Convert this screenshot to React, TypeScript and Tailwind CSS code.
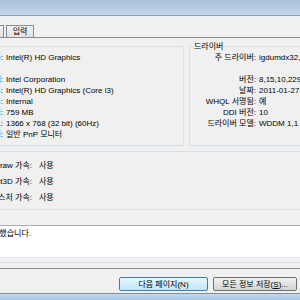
const font = "font-['Liberation_Sans','Noto_Sans_CJK_KR',sans-serif]";

const deviceRows: [string, string][] = [
  ["이름:", "Intel(R) HD Graphics"],
  ["", ""],
  ["제조업체:", "Intel Corporation"],
  ["칩 종류:", "Intel(R) HD Graphics (Core i3)"],
  ["DAC 종류:", "Internal"],
  ["대략적인 총 메모리:", "759 MB"],
  ["현재 표시 모드:", "1366 x 768 (32 bit) (60Hz)"],
  ["모니터:", "일반 PnP 모니터"],
];

const driverRows: [string, string][] = [
  ["주 드라이버:", "igdumdx32,dll,igd10umd32,dll"],
  ["", ""],
  ["버전:", "8,15,10,2291"],
  ["날짜:", "2011-01-27 오후 7:38:00"],
  ["WHQL 서명됨:", "예"],
  ["DDI 버전:", "10"],
  ["드라이버 모델:", "WDDM 1,1"],
];

const features: [string, string][] = [
  ["DirectDraw 가속:", "사용"],
  ["Direct3D 가속:", "사용"],
  ["AGP 텍스처 가속:", "사용"],
];

function InfoRow({ label, value, labelWidth }: { label: string; value: string; labelWidth: string }) {
  return (
    <div className="flex h-[11px] items-center whitespace-nowrap">
      <div className={`flex shrink-0 justify-end ${labelWidth}`}>
        <span className="shrink-0">{label}</span>
      </div>
      <span className="ml-[3px]">{value}</span>
    </div>
  );
}

export default function App() {
  return (
    <div className={`flex h-[300px] w-[300px] flex-col overflow-hidden bg-[#f0f0f0] text-[8px] leading-[11px] text-black ${font}`}>
      {/* 제목 표시줄 */}
      <div className="h-[16px] shrink-0 border-b border-[#8ea3bb] bg-gradient-to-b from-[#a9c1dc] to-[#c3d5e9]" />

      {/* 탭 */}
      <div className="flex h-[21px] shrink-0 items-end gap-[1px]">
        <div className="h-[12px] w-[4px] border border-l-0 border-b-0 border-[#898c95] bg-gradient-to-b from-[#f3f3f3] to-[#e1e1e1]" />
        <div className="ml-[1px] flex h-[12px] w-[28px] items-center justify-center border border-b-0 border-[#898c95] bg-gradient-to-b from-[#f3f3f3] to-[#e1e1e1]">
          입력
        </div>
      </div>

      {/* 탭 페이지 */}
      <div className="flex h-[232px] shrink-0 flex-col border-y border-[#898c95] bg-[#f0f0f0] pt-[3px]">
        <div className="flex gap-[5px]">
          <fieldset className="-ml-[60px] h-[105px] w-[244px] shrink-0 border border-[#d5dfe5]">
            <legend className="ml-[4px] px-[2px]">장치</legend>
            {deviceRows.map(([l, v], i) => (
              <InfoRow key={i} label={l} value={v} labelWidth="w-[62px]" />
            ))}
          </fieldset>
          <fieldset className="h-[105px] w-[130px] shrink-0 border border-[#d5dfe5]">
            <legend className="ml-[3px] px-[1px]">드라이버</legend>
            {driverRows.map(([l, v], i) => (
              <InfoRow key={i} label={l} value={v} labelWidth="w-[66px]" />
            ))}
          </fieldset>
        </div>

        <fieldset className="-ml-[60px] mr-[-10px] h-[64px] shrink-0 border border-[#d5dfe5]">
          <legend className="ml-[4px] px-[2px]">DirectX 기능</legend>
          {features.map(([l, v], i) => (
            <div key={i} className="flex h-[16px] items-center whitespace-nowrap">
              <div className="flex w-[91px] shrink-0 justify-end">
                <span className="shrink-0">{l}</span>
              </div>
              <span className="ml-[7px]">{v}</span>
            </div>
          ))}
        </fieldset>

        <div className="-ml-[10px] mr-[-10px] mt-[15px] border-b border-[#d5dfe5] pb-[4px] pl-[4px] pr-[4px]">
          <div className="h-[33px] border border-[#abadb3] border-x-[#dbdfe6] border-b-[#e3e9ef] bg-white pt-[2px]">
            <div className="flex w-[36px] justify-end whitespace-nowrap">
              <span className="shrink-0">• 문제를 발견하지 못했습니다.</span>
            </div>
          </div>
        </div>
      </div>

      {/* 버튼 */}
      <div className="flex h-[24px] shrink-0 items-start justify-end gap-[5px] pr-[3px] pt-[8px]">
        <button className="flex h-[14px] w-[89px] items-center justify-center rounded-[2px] border border-[#3c7fb1] bg-gradient-to-b from-[#eaf6fd] to-[#bee6fd]">
          다음 페이지(N)
        </button>
        <button className="flex h-[14px] w-[84px] items-center justify-center rounded-[2px] border border-[#707070] bg-gradient-to-b from-[#f2f2f2] to-[#d4d4d4]">
          모든 정보 저장(<span className="underline">S</span>)...
        </button>
      </div>

      {/* 창 테두리 */}
      <div className="flex-1 border-t border-[#7d8ea3] bg-gradient-to-b from-[#c5d8ee] to-[#a9c4e3]" />
    </div>
  );
}
